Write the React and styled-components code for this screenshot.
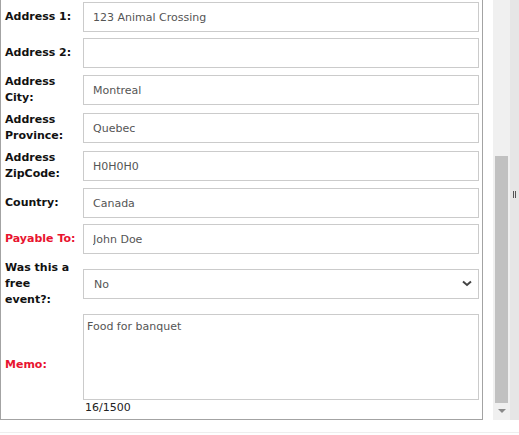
import styled, { createGlobalStyle } from 'styled-components';

const GlobalStyle = createGlobalStyle`
  html, body {
    margin: 0;
    padding: 0;
    background: #fff;
  }
  body {
    font-family: "DejaVu Sans", Verdana, sans-serif;
  }
`;

const Page = styled.div`
  width: 519px;
  height: 435px;
  display: flex;
  flex-direction: column;
  overflow: hidden;
`;

const Main = styled.div`
  display: flex;
  height: 420px;
`;

const Panel = styled.div`
  width: 483px;
  height: 420px;
  box-sizing: border-box;
  border: 1px solid #a3a3a3;
  border-top: none;
  padding: 0 3px 0 4px;
  overflow: hidden;
`;

const Form = styled.div`
  margin-top: -1px;
  display: flex;
  flex-direction: column;
`;

const Row = styled.div`
  display: grid;
  grid-template-columns: 78px 396px;
  align-items: center;
  padding: 3px 0;
`;

const Label = styled.label`
  font-size: 11px;
  font-weight: 700;
  line-height: 16px;
  color: ${(p) => (p.$required ? '#e8132f' : '#111')};
  padding-right: 4px;
`;

const Input = styled.input`
  box-sizing: border-box;
  width: 396px;
  height: 30px;
  border: 1px solid #cbcbcb;
  padding: 0 9px;
  font-family: inherit;
  font-size: 11px;
  color: #555;
  background: #fff;
  outline: none;
`;

const SelectWrap = styled.div`
  position: relative;
  width: 396px;
  height: 30px;
`;

const Select = styled.select`
  appearance: none;
  box-sizing: border-box;
  width: 100%;
  height: 30px;
  border: 1px solid #cbcbcb;
  padding: 0 10px;
  font-family: inherit;
  font-size: 11px;
  color: #555;
  background: #fff;
  outline: none;
`;

const Chevron = styled.svg`
  position: absolute;
  right: 7px;
  top: 11px;
  pointer-events: none;
`;

const MemoField = styled.div`
  display: flex;
  flex-direction: column;
`;

const TextArea = styled.textarea`
  box-sizing: border-box;
  width: 396px;
  height: 86px;
  border: 1px solid #cbcbcb;
  padding: 5px 3px;
  font-family: inherit;
  font-size: 11px;
  line-height: 14px;
  color: #555;
  resize: none;
  outline: none;
`;

const Counter = styled.span`
  font-size: 11px;
  line-height: 16px;
  color: #222;
  padding-left: 2px;
`;

const Gutter = styled.div`
  width: 10px;
`;

const Scrollbar = styled.div`
  width: 17px;
  height: 420px;
  background: #f0f0f0;
  display: flex;
  flex-direction: column;
  align-items: center;
`;

const Thumb = styled.div`
  margin-top: 156px;
  width: 13px;
  height: 247px;
  background: #c1c1c1;
`;

const ArrowDown = styled.div`
  margin-top: 6px;
  width: 0;
  height: 0;
  border-left: 4px solid transparent;
  border-right: 4px solid transparent;
  border-top: 4px solid #8a8a8a;
`;

const Splitter = styled.div`
  width: 9px;
  height: 420px;
  background: #e6e6e6;
  display: flex;
  justify-content: center;
  padding-top: 191px;
  box-sizing: border-box;
`;

const Grip = styled.div`
  width: 3px;
  height: 7px;
  border-left: 1px solid #555;
  border-right: 1px solid #555;
  box-sizing: border-box;
`;

const Footer = styled.div`
  margin-top: 12px;
  height: 1px;
  background: #eeeeee;
`;

const fields = [
  { label: 'Address 1:', value: '123 Animal Crossing' },
  { label: 'Address 2:', value: '' },
  { label: 'Address City:', value: 'Montreal' },
  { label: 'Address Province:', value: 'Quebec' },
  { label: 'Address ZipCode:', value: 'H0H0H0' },
  { label: 'Country:', value: 'Canada' },
  { label: 'Payable To:', value: 'John Doe', required: true },
];

export default function App() {
  const memo = 'Food for banquet';
  return (
    <Page>
      <GlobalStyle />
      <Main>
        <Panel>
          <Form>
            {fields.map((f) => (
              <Row key={f.label}>
                <Label $required={f.required}>{f.label}</Label>
                <Input defaultValue={f.value} />
              </Row>
            ))}
            <Row>
              <Label>Was this a free event?:</Label>
              <SelectWrap>
                <Select defaultValue="No">
                  <option>No</option>
                  <option>Yes</option>
                </Select>
                <Chevron width="10" height="7" viewBox="0 0 10 7">
                  <path d="M1 1.5 L5 5 L9 1.5" fill="none" stroke="#444" strokeWidth="2" />
                </Chevron>
              </SelectWrap>
            </Row>
            <Row>
              <Label $required>Memo:</Label>
              <MemoField>
                <TextArea defaultValue={memo} />
                <Counter>{memo.length}/1500</Counter>
              </MemoField>
            </Row>
          </Form>
        </Panel>
        <Gutter />
        <Scrollbar>
          <Thumb />
          <ArrowDown />
        </Scrollbar>
        <Splitter>
          <Grip />
        </Splitter>
      </Main>
      <Footer />
    </Page>
  );
}
